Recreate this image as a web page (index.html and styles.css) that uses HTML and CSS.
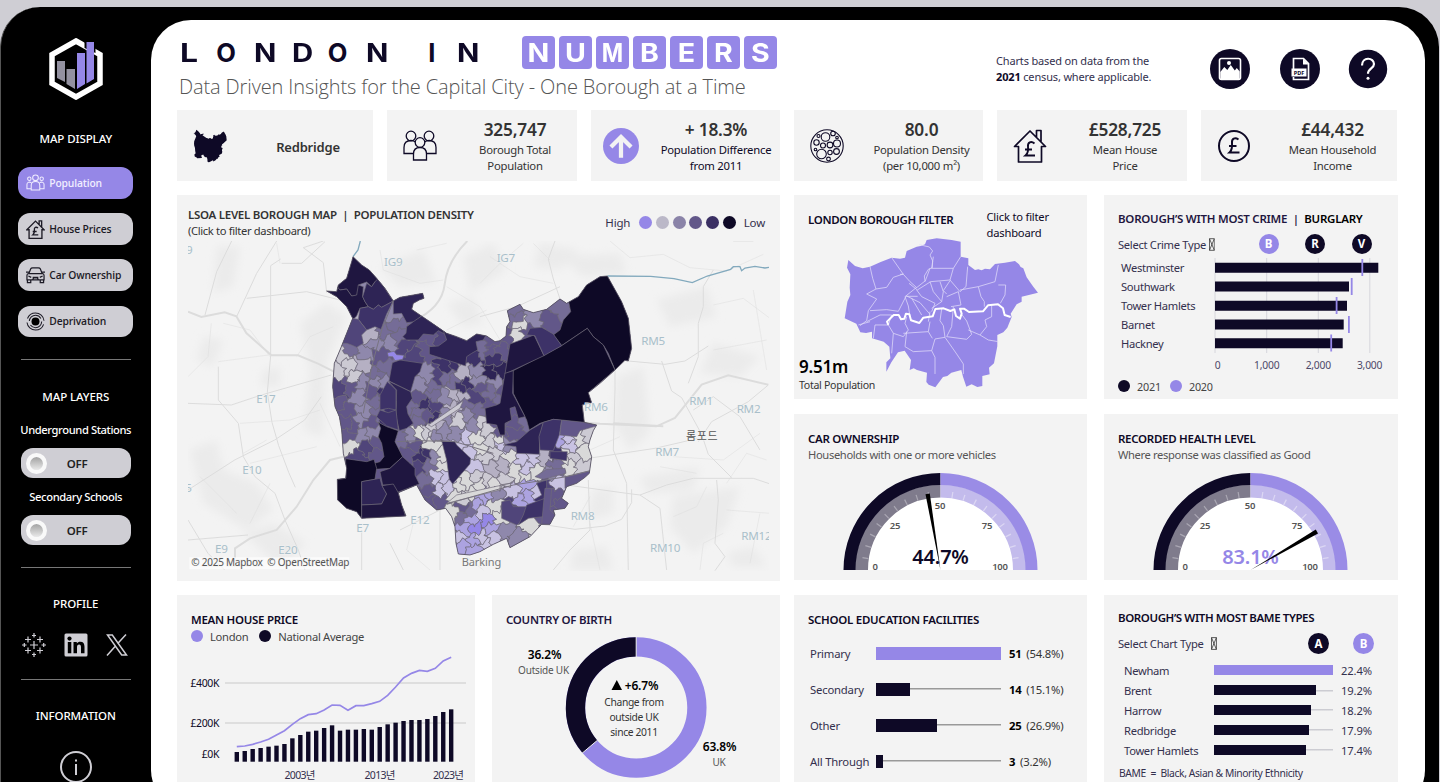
FILE: index.html
```html
<!DOCTYPE html>
<html lang="en">
<head>
<meta charset="utf-8">
<title>London in Numbers</title>
<link rel="stylesheet" href="styles.css">
</head>
<body>
<svg class="defs" width="0" height="0">
  <symbol id="house" viewBox="0 0 34 34"><path d="M1.5 17.5 17 2l15.500 15.500h-4V33h-23V17.500zM23.500 8V1.500h4.500V13" fill="none" stroke="currentColor" stroke-width="1.700" stroke-linejoin="round"/><path d="M21.500 14.500c-3.500-3-7-1-6.500 3 .3 3 .6 6.500-2.500 9h9.500M12 20.500h7" fill="none" stroke="currentColor" stroke-width="1.900"/></symbol>
  <symbol id="people" viewBox="0 0 34 32"><g fill="none" stroke="currentColor" stroke-width="1.300"><circle cx="8" cy="6" r="4.800"/><circle cx="26" cy="6" r="4.800"/><path d="M11 23.500H1v-6c0-5 3-7 7-7 2 0 3.500.7 4.500 1.500M23 23.500h10v-6c0-5-3-7-7-7-2 0-3.500.7-4.500 1.500"/><circle cx="17" cy="12.500" r="4.800"/><path d="M10.500 30v-6c0-4 2.500-6.500 6.500-6.500s6.500 2.500 6.500 6.500v6z"/></g></symbol>
  <symbol id="tofu" viewBox="0 0 6 13"><path d="M.5.5h5v12h-5zl5 12M5.500.5l-5 12" fill="none" stroke="#333" stroke-width=".8"/></symbol>
</svg>
<div class="frame">
  <aside class="side">
    <svg class="logo" viewBox="0 0 54 62"><path d="M27 3 51 16.500v29L27 59 3 45.500v-29z" fill="none" stroke="#fff" stroke-width="5.500"/><path d="M35.500 0h11v15l-11-5z" fill="#000"/><path d="M8 23h8v21l-8-4zM17.500 31H26v20l-8.500-5z" fill="#9391a0"/><path d="M28 15h8v31l-8 5zM37.500 4H45v37l-7.500 4.500z" fill="#9587e7"/></svg>
    <h2 class="s-map">MAP DISPLAY</h2>
    <nav class="nav">
      <button class="pill on"><svg viewBox="0 0 20 18"><g fill="none" stroke="currentColor" stroke-width="1.100"><circle cx="10" cy="4" r="3"/><circle cx="3.500" cy="5" r="1.800"/><circle cx="16.500" cy="5" r="1.800"/><path d="M5.500 17v-5c0-3 2-4 4.500-4s4.500 1 4.500 4v5zM5 15.500H1V11c0-2 2-3 4.500-2M15 15.500h4V11c0-2-2-3-4.500-2"/></g></svg>Population</button>
      <button class="pill"><svg viewBox="0 0 34 34"><g fill="none" stroke="currentColor" stroke-width="2.400"><path d="M1.500 17.500 17 2l15.500 15.500h-4V33h-23V17.500zM23.500 8V1.500h4.500V13"/><path d="M21.500 14.500c-3.500-3-7-1-6.500 3 .3 3 .6 6.500-2.500 9h9.500M12 20.500h7"/></g></svg>House Prices</button>
      <button class="pill"><svg viewBox="0 0 20 18"><path d="M3 7l2-5c.3-.7 1-1 2-1h6c1 0 1.700.3 2 1l2 5M2.500 7h15c1 0 1.500 1 1.500 2v4.500H1V9c0-1 .5-2 1.500-2zM0 5.500h3M17 5.500h3M1.500 14v2.500H5V14M15 14v2.500h3.500V14M7 11h6M2.500 9.500l3 1.500M17.500 9.500l-3 1.500M7 13.500l1-2h4l1 2" fill="none" stroke="currentColor" stroke-width="1.300"/></svg>Car Ownership</button>
      <button class="pill"><svg viewBox="0 0 20 20"><circle cx="10" cy="10" r="4.200" fill="#000"/><circle cx="10" cy="10" r="6.500" fill="none" stroke="currentColor" stroke-width="1.100" stroke-dasharray="16 4.400"/><circle cx="10" cy="10" r="9" fill="none" stroke="currentColor" stroke-width="1.100" stroke-dasharray="24 4.300" stroke-dashoffset="-3"/></svg>Deprivation</button>
    </nav>
    <hr>
    <h2 class="s-lay">MAP LAYERS</h2>
    <h3>Underground Stations</h3>
    <div class="toggle"><i></i><b>OFF</b></div>
    <h3 class="sec">Secondary Schools</h3>
    <div class="toggle"><i></i><b>OFF</b></div>
    <hr>
    <h2 class="s-pro">PROFILE</h2>
    <div class="social">
      <svg viewBox="0 0 24 24"><path d="M12 8v8M8 12h8M6 3.500v6M3 6.500h6M18 3.500v6M15 6.500h6M6 14.500v6M3 17.500h6M18 14.500v6M15 17.500h6M12 0v4.500M10 2.500h4M12 19.500V24M10 21.500h4M2.300 10v4M0 12h4.500M21.700 10v4M19.500 12H24" stroke="#cfced4" stroke-width="1.200" fill="none"/></svg>
      <svg viewBox="0 0 24 24"><rect x=".5" y=".5" width="23" height="23" rx="1.500" fill="#cfced4"/><circle cx="5.500" cy="5.600" r="2.100"/><path d="M3.800 9h3.500v11.300H3.800zM9.500 9h3.300v1.600c.8-1.300 2-1.900 3.500-1.900 3 0 4.200 1.900 4.200 5v6.600H17v-6c0-1.700-.6-2.700-1.900-2.700-1.400 0-2.100 1-2.100 2.700v6H9.500z"/></svg>
      <svg viewBox="0 0 24 24"><path d="M2.500 2h4.800l14.200 20h-4.800zM21 1.500l-8.500 9.200M10.500 13l-8.500 9.500" stroke="#cfced4" stroke-width="1.500" fill="none"/></svg>
    </div>
    <hr>
    <h2 class="s-inf">INFORMATION</h2>
    <svg class="info" viewBox="0 0 34 34"><circle cx="17" cy="17" r="15" fill="none" stroke="#cfced4" stroke-width="2"/><path d="M17 14v11M17 9.500v2" stroke="#cfced4" stroke-width="2"/></svg>
  </aside>

  <main class="page">
    <header class="head">
      <div class="brand">
        <h1 class="title"><span>L</span><span>O</span><span>N</span><span>D</span><span>O</span><span>N</span><span class="gap"></span><span>I</span><span>N</span></h1>
        <div class="tiles"><b><i>N</i></b><b><i>U</i></b><b><i>M</i></b><b><i>B</i></b><b><i>E</i></b><b><i>R</i></b><b><i>S</i></b></div>
        <p class="sub">Data Driven Insights for the Capital City - One Borough at a Time</p>
      </div>
      <p class="note">Charts based on data from the<br><b>2021</b> census, where applicable.</p>
      <div class="acts">
        <svg viewBox="0 0 40 40"><circle cx="20" cy="20" r="20" fill="#0e0926"/><rect x="9.500" y="9.500" width="21" height="21" rx="2" fill="none" stroke="#fff" stroke-width="1.600"/><path d="M10.300 23l4-5 3 3 3.500-5 4 5.500 2-2.500 2.900 3.500V30H10.300z" fill="#fff"/><circle cx="19" cy="14" r="2" fill="#fff"/></svg>
        <svg viewBox="0 0 40 40"><circle cx="20" cy="20" r="20" fill="#0e0926"/><path d="M13.500 20V9.500h10l5 5v16h-15V28" fill="none" stroke="#fff" stroke-width="1.700"/><path d="M23 9.500v6h6z" fill="#fff"/><rect x="11.500" y="19.500" width="15" height="8" fill="#fff"/><text x="19" y="26" text-anchor="middle" class="pdf">PDF</text></svg>
        <svg viewBox="0 0 40 40"><circle cx="20" cy="20" r="19.200" fill="#0e0926"/><path d="M14 16.500c0-9 12-8.500 12-1.500 0 4.500-6 4.500-6 9.800" fill="none" stroke="#fff" stroke-width="2.200"/><circle cx="20" cy="29.300" r="1.500" fill="#fff"/></svg>
      </div>
    </header>

    <section class="kpis">
      <article class="kpi one"><svg viewBox="430 190 935 920"><use href="#redb" fill="#0e0926"/></svg><div><strong>Redbridge</strong></div></article>
      <article class="kpi"><svg><use href="#people"/></svg><div><strong>325,747</strong><p>Borough Total<br>Population</p></div></article>
      <article class="kpi diff"><svg viewBox="0 0 34 34"><circle cx="17" cy="17" r="17" fill="#9587e7"/><path d="M17 28V9M7.500 18 17 8.500 26.500 18" fill="none" stroke="#f3f3f3" stroke-width="4"/></svg><div><strong>+ 18.3%</strong><p>Population Difference<br>from 2011</p></div></article>
      <article class="kpi"><svg viewBox="0 0 34 34"><g fill="none" stroke="#0e0926" stroke-width="1.100"><circle cx="17" cy="17" r="16.200"/><circle cx="15.500" cy="8" r="4.300"/><circle cx="11.500" cy="25" r="4.800"/><circle cx="27" cy="14.500" r="3.500"/><circle cx="6.500" cy="13.500" r="2.700"/><circle cx="13" cy="16.500" r="2.500"/><circle cx="20" cy="16" r="2.900"/><circle cx="26.500" cy="22.500" r="2.900"/><circle cx="20" cy="23.500" r="2.200"/><circle cx="18.500" cy="30" r="1.900"/><circle cx="23" cy="4.500" r="2.300"/><circle cx="27" cy="8.500" r="1.300"/><circle cx="5.500" cy="20.500" r="1.300"/><circle cx="8.500" cy="7" r="1.500"/></g></svg><div><strong>80.0</strong><p>Population Density<br>(per 10,000 m²)</p></div></article>
      <article class="kpi"><svg><use href="#house"/></svg><div><strong>£528,725</strong><p>Mean House<br>Price</p></div></article>
      <article class="kpi last"><svg viewBox="0 0 34 34"><circle cx="17" cy="17" r="15" fill="none" stroke="#0e0926" stroke-width="2"/><path d="M21.500 10.500c-3.500-2.500-7-1-6.500 3.500.3 3.500.3 7-2.500 9.500h10M12 17h7.500" fill="none" stroke="#0e0926" stroke-width="2"/></svg><div><strong>£44,432</strong><p>Mean Household<br>Income</p></div></article>
    </section>

    <section class="mid">
      <article class="card map">
        <div class="maphead"><div><h4>LSOA LEVEL BOROUGH MAP&nbsp; |&nbsp; POPULATION DENSITY</h4><p>(Click to filter dashboard)</p></div>
          <div class="scale"><span>High</span><i class="c1"></i><i class="c2"></i><i class="c3"></i><i class="c4"></i><i class="c5"></i><i class="c6"></i><span>Low</span></div></div>
        <svg class="mapsvg" viewBox="24 153 1744 990">
          <defs>
            <path id="redb" d="M519 200L545 225 568 240 590 265 615 295 640 333 660 322 700 315 728 310 732 325 718 330 700 340 695 358 720 375 760 402 800 430 830 440 860 452 890 432 920 438 945 455 960 452 978 438 980 410 990 395 982 362 1020 343 1030 358 1060 368 1100 358 1140 327 1160 340 1195 320 1220 285 1260 260 1282 258 1300 290 1325 335 1345 385 1350 430 1355 475 1345 513 1335 511 1305 540 1260 580 1225 608 1235 638 1207 645 1213 697 1250 705 1240 722 1230 750 1225 770 1235 800 1228 850 1215 862 1190 880 1160 890 1145 925 1165 940 1155 955 1120 960 1125 975 1110 1003 1085 1003 1050 1040 990 1073 980 1045 940 1063 900 1085 870 1095 835 1092 828 1060 825 1010 815 980 797 955 770 960 735 930 710 885 655 908 665 945 678 978 545 985 530 965 500 955 473 930 472 868 497 865 500 835 490 790 485 720 478 680 465 650 458 590 463 520 480 480 500 430 518 385 500 350 470 320 440 303 470 305 475 285 500 265 515 215Z"/>
            <clipPath id="redclip"><use href="#redb"/></clipPath>
            <filter id="soft" x="-20%" y="-20%" width="140%" height="140%"><feGaussianBlur stdDeviation="12"/></filter>
          </defs>
          <g fill="#ebebeb" filter="url(#soft)">
            <path d="M110 170h70l-20 120-60 20zM70 440l60 10-30 80-50-20zM360 400l80-60 60 40-60 140-10 220-60-20 20-180zM30 780l80-30 20 90 100 40 50 80-80 60-130-80zM190 1030l90-30 100 60-80 70zM600 230l130-50 40 100-110 10zM850 200l90-40 40 80-110 70zM800 340l80-20 30 80-60 10zM250 540l50-10v60h-60zM1140 200l180-10 20 60-130 10zM1430 330l150-40 30 90-140 30zM1310 560l80-30 20 200-60 50-50-80zM1600 460l140 40-60 60-120-10zM1380 860l180-30-20 70-140 10zM1480 920l200-30-40 120-100 80-70-80zM1180 1080l100-10 20 70-130 0zM1240 900l60-10v80l-80 20zM1080 160l120 20-60 60-80-10zM1640 1090l80-20 40 60h-100z"/></g>
          <g fill="none" stroke="#dcdcdc" stroke-width="2">
            <path stroke-width="6" d="M24 365l40 16 70-14 35 12 30 50 75 67h80l60 25 60 30M490 800l-40 10-50 60-50 80-60 70-80 25-45 30v30M862 153q-60 60-68 130t-94 110M1110 690l150 11 170 8 55-25 80-100 80-28 120 28M1300 700l150 9"/>
            <path stroke-width="3" d="M75 375l35-130 45-92M24 640l130 5 90-30 210-60M272 497l-10 110 14 90 20 70 30 80 20 45M115 530v100l60 70 15 100 35 60 60 50 30 80 40 90 20 60M24 900l140-90 120-60 90-60 50-70M170 380l60-130 60-97M272 497v-270l30-20M200 325l180-20 120 30M430 153l-60 20 60 45 10 90M305 220h60l70-65M24 990l60 100 50 50M24 1050l180-15M545 1020v120M660 1020l120-60 60-30M630 1060l40 80M780 960v180M900 380l110-30 130-60M1140 327l-20-60-15-60 20-54M1720 153l-60 0M1345 513l110 10 60-10 70-45M1445 513l30 90 30 20 60 110 20 60 70 70M1305 540v60l-5 180 40 100 5 260M1225 805l200-30 130-30M1160 885l180 25 40 5 80-30 80-20h180l90 30M1380 915l60 40 20 185M1610 870l5 60-10 130 30 40-30 42M1765 585l-60 50-110 60-40 60M1085 1003l100 15 90-10 50-20 30-50v-40M1225 870l5 150-60 60-50 60M1600 240l-30 50v60l-15 50v100l-30 80M1540 660l60-40 80 60 60 100"/>
            <path stroke-width="1.500" d="M130 400l80 20 60 80M115 515l150-20M350 500l40-60 70-30M180 700l150-10 90-30M190 790l70-40M24 560l60-60 10-100M290 160l10 60M210 820l200-50M60 860l110 110M270 880l-60 120M420 640l60 130M600 180l10 60 110 40 70-10M800 160l-90 20M800 290l100 60 60 100M800 420l120-60M930 200l90 60 100 20M900 280l60-60 70-60M1060 160l50 50M1290 153l60 50 100-10 80 40 110 10 110-50M1600 345l90-20 80 60M1600 480l160-30M1720 300l40 240M1480 800l150 10 110-80M1440 830l110 20M1580 890l-30 60-70 30M1230 780l90-40M1230 1000l30 140M1180 1010l50-90M1640 960l130 10M1740 970l-30 150M700 1000l-20 80 70 60M860 1100l50 40M1560 1140l10-80 60-30M1640 880l60-90 60 20"/>
          </g>
          <path d="M1282 258l130 1 70 7 55 12 45-20 70-20 8-8h20l5 12 10-8 30-5 30 5 50-8 60-10M519 200l15-20 7-27" fill="none" stroke="#82a9bd" stroke-width="4"/>
          <g id="lsoa" clip-path="url(#redclip)"></g>
          <use href="#redb" fill="none" stroke="#55505f" stroke-width="2.500"/>
          <g class="post">
            <text x="18" y="191">9</text><text x="612" y="229">IG9</text><text x="950" y="217">IG7</text><text x="1384" y="465">RM5</text><text x="1528" y="645">RM1</text><text x="1670" y="669">RM2</text><text x="1212" y="663">RM6</text><text x="1426" y="798">RM7</text><text x="1172" y="990">RM8</text><text x="1410" y="1086">RM10</text><text x="1684" y="1050">RM12</text><text x="229" y="640">E17</text><text x="187" y="853">E10</text><text x="105" y="1088">E9</text><text x="295" y="1093">E20</text><text x="529" y="1026">E7</text><text x="691" y="1003">E12</text><text x="16" y="906">5</text>
          </g>
          <text class="town" x="845" y="1127">Barking</text><text class="town ko" x="1518" y="749">롬포드</text>
          <path d="M28 1102h480v36H28z" fill="#fff" opacity=".65"/>
          <text class="town attr" x="34" y="1129" textLength="474">© 2025 Mapbox&#160; © OpenStreetMap</text>
        </svg>
      </article>

      <article class="card lond">
        <div class="row"><h4>LONDON BOROUGH FILTER</h4><p>Click to filter<br>dashboard</p></div>
        <svg class="lsvg" viewBox="12 135 879 493">
          <path fill="#9587e7" d="M175 210l20 18 23 7 22-5 32-14 33-13 25 3 15-3 5-20 30-13 12-2 13-5 5-13 30-5 45 5 27 5v45l23 5v20l20 15 10-2 10 3 10-5 15 2 15-16 30-4 30-5 12 10 5 8 8 4 10 27 20 28 14 18-49 12v15l-15 8-18 28 3 10-13 32-12 14-18 8v34l-10 51-15 13 2 20-22 5v30l-15 3-17-8-16 7-10-30-5-20-30 8-12 10-13 3-23 31-20-8-7-8 2-28-30-8-10-5-12 5 4-30-19-28-20 5-20 30-15 28v-28l12-12-3-35-17-15-35-10v-20l-18 4-17-2-12-26-35-16 8-50 9-20-2-22 2-40-10-20z"/>
          <g fill="none" stroke="#e0dbf8" stroke-width="2.300" stroke-linejoin="round">
            <path d="M240 230l8 35 10 32 32-5 20-30 30-10M305 203l35 50 20 22 20 18 25-20-2-15 12-20 12-5 1-20-8-18 8-12-10-12-30-7M430 200l-5 35h65l22-35M490 235l-10 35-58 5-40 25-25-20M420 235l-15 40M480 270l30 35 18-15 5-60M510 300l55-10 8 30 10 15v15M565 290l50-15 10-50M625 285l22 0-2 30-14 25M340 253l-10 0M258 297l-28 15 30 15-25 35-5 30-20 15M240 362l50-3 35 5 23-45 35 0M345 320l10 28 5 32M365 325l30 50M350 318l40 20 30 35M380 300l15 20 40 20-10 25M420 275l10 30 25 30-30 20M450 275l10 30-5 30M480 272l-20 30 10 10M470 320l35-15 8 40-30 5M380 292l-35 28M230 395l40-20 35 0M205 405l35-10M305 375l-10 30-40 0-5 40M295 405l15 25 30 10 15-20-10-20 5-20M310 430l-5 60M340 430l75-5 5-30M350 425l-5 45 25 15 55-3 10 20 0 50M425 482l10-35 30-5-5-35-10-15 5-35M415 425l12 20M465 442l35 50 20 30 0 30M490 350l-5 60-15 30 60 8 15-15-15-40-15-20M535 420l35 15 20-25-5-20 20-10v-35M570 435l25 15 30 5M415 395l5-30"/>
            <path stroke="#fff" stroke-width="6" d="M295 405l-4-10 20-20h15l7 13 10-2 5-15 10 2 5 18 25 8 12-16 28-4 8-22 25-2 20 8 12-5 5 20 12 8 5-15-5-15 12 0 15 10 42-2 15-18 30-3 15 12 5 20 18 6"/>
          </g></svg>
        <div class="pop"><strong>9.51m</strong><p>Total Population</p></div>
      </article>

      <article class="card crime">
        <h4>BOROUGH’S WITH MOST CRIME&nbsp; |&nbsp; <em>BURGLARY</em></h4>
        <div class="pick"><span>Select Crime Type</span><svg class="tofu"><use href="#tofu"/></svg><b class="dot lil">B</b><b class="dot">R</b><b class="dot">V</b></div>
        <svg class="csvg" viewBox="1104 256 294 118">
          <path d="M1215 258v95M1266.700 258v95M1318.300 258v95M1369.800 258v95" stroke="#d6d6dc" stroke-width="1"/>
          <path fill="#0e0926" d="M1215 262.800h163.300v10H1215zM1215 281.400h134v10H1215zM1215 300.800h132v10H1215zM1215 319.400h128.700v10H1215zM1215 338.300h127.700v10H1215z"/>
          <path stroke="#9587e7" stroke-width="1.800" d="M1362.300 259v17M1351.700 278v17M1336.600 297v17M1348.900 316v17M1331.200 334.500v17"/>
          <g class="lab"><text x="1121" y="272">Westminster</text><text x="1121" y="291">Southwark</text><text x="1121" y="310">Tower Hamlets</text><text x="1121" y="329">Barnet</text><text x="1121" y="348">Hackney</text></g>
          <g class="tick" text-anchor="middle"><text x="1217.500" y="369">0</text><text x="1266.700" y="369">1,000</text><text x="1318.300" y="369">2,000</text><text x="1369.600" y="369">3,000</text></g>
        </svg>
        <div class="leg"><i></i><span>2021</span><i class="lil"></i><span>2020</span></div>
      </article>

      <article class="card gauge"><h4>CAR OWNERSHIP</h4><p>Households with one or more vehicles</p>
        <svg viewBox="0 0 293 98"><g class="dial"></g><text class="gv" x="146.500" y="91.500">44.7%</text><path d="M146.500 98 131.500 22.300l4.300-.8z"/></svg></article>
      <article class="card gauge"><h4>RECORDED HEALTH LEVEL</h4><p>Where response was classified as Good</p>
        <svg viewBox="0 0 293 98"><g class="dial"></g><text class="gv lil" x="146.500" y="91.500">83.1%</text><path d="M146.500 98 211.800 57.500l2.200 4z"/></svg></article>
    </section>

    <section class="bottom">
      <article class="card price">
        <h4>MEAN HOUSE PRICE</h4>
        <div class="leg"><i class="lil"></i><span>London</span><i></i><span>National Average</span></div>
        <svg viewBox="177 645 298 140"><path d="M225 683h241M225 723h241" stroke="#dedede" stroke-width="1.800"/><g id="bars" fill="#0e0926"></g><polyline id="line" fill="none" stroke="#9587e7" stroke-width="1.700"/>
          <g class="lab pr" text-anchor="end"><text x="219" y="686.500">£400K</text><text x="219" y="726.500">£200K</text><text x="219" y="757.500">£0K</text></g>
          <g class="lab yr"><text x="284.500" y="778.500" textLength="31">2003년</text><text x="364.500" y="778.500" textLength="31">2013년</text><text x="433" y="778.500" textLength="31">2023년</text></g></svg>
      </article>
      <article class="card birth">
        <h4>COUNTRY OF BIRTH</h4>
        <svg viewBox="492 632 288 150">
          <circle cx="636.200" cy="707.500" r="60.700" fill="none" stroke="#9587e7" stroke-width="19.300"/>
          <circle cx="636.200" cy="707.500" r="60.700" fill="none" stroke="#0e0926" stroke-width="19.300" pathLength="100" stroke-dasharray="36.200 63.800" transform="rotate(139.700 636.200 707.500)"/>
          <path d="M636.200 637v20M597.300 740.400l-15.400 13" stroke="#f3f3f3"/>
          <g text-anchor="middle"><text class="pc" x="544.500" y="658.500">36.2%</text><text class="sm" x="543.500" y="674">Outside UK</text><text class="pc" x="719.500" y="751">63.8%</text><text class="sm" x="719" y="766">UK</text>
          <path d="M611.500 690h10.500l-5.200-10z"/><text class="pc" x="641.500" y="689.500">+6.7%</text><text class="md" x="634" y="705.500">Change from</text><text class="md" x="634" y="720.500">outside UK</text><text class="md" x="634" y="735.500">since 2011</text></g></svg>
      </article>
      <article class="card school">
        <h4>SCHOOL EDUCATION FACILITIES</h4>
        <div class="sbar"><span>Primary</span><div class="track full"><i style="width:100%"></i></div><p><b>51</b> (54.8%)</p></div>
        <div class="sbar"><span>Secondary</span><div class="track"><i style="width:27.500%"></i></div><p><b>14</b> (15.1%)</p></div>
        <div class="sbar"><span>Other</span><div class="track"><i style="width:49%"></i></div><p><b>25</b> (26.9%)</p></div>
        <div class="sbar"><span>All Through</span><div class="track"><i style="width:5.900%"></i></div><p><b>3</b> (3.2%)</p></div>
      </article>
      <article class="card bame">
        <h4>BOROUGH’S WITH MOST BAME TYPES</h4>
        <div class="pick"><span>Select Chart Type</span><svg class="tofu"><use href="#tofu"/></svg><b class="dot">A</b><b class="dot lil">B</b></div>
        <div class="bbar"><span>Newham</span><div class="track full"><i style="width:100%"></i></div><p>22.4%</p></div>
        <div class="bbar"><span>Brent</span><div class="track"><i style="width:85.700%"></i></div><p>19.2%</p></div>
        <div class="bbar"><span>Harrow</span><div class="track"><i style="width:81.300%"></i></div><p>18.2%</p></div>
        <div class="bbar"><span>Redbridge</span><div class="track"><i style="width:79.900%"></i></div><p>17.9%</p></div>
        <div class="bbar"><span>Tower Hamlets</span><div class="track"><i style="width:77.700%"></i></div><p>17.4%</p></div>
        <p class="foot">BAME&nbsp; =&nbsp; Black, Asian &amp; Minority Ethnicity</p>
      </article>
    </section>
  </main>
</div>
<script src="charts.js"></script>
</body>
</html>
```

FILE: styles.css
```css
* { box-sizing: border-box; margin: 0; padding: 0; }
html { overflow: hidden; }
body { height: 782px; overflow: hidden; background: #cfced4; font-family: "Noto Sans", "Open Sans", "Noto Sans CJK KR", sans-serif; color: #0e0926; font-size: 11.5px; letter-spacing: -.2px; }
svg { display: block; }
.defs { position: absolute; }
.frame { display: flex; height: 775px; margin: 7px 1px 0 0; padding: 13px 14px 0 0; background: #000; border-radius: 40px 40px 0 0; border-left: 1px solid #555; overflow: hidden; }

/* sidebar */
.side { width: 149.500px; flex: none; display: flex; flex-direction: column; align-items: center; color: #fff; padding-top: 18px; }
.logo { width: 54px; height: 62px; flex: none; }
.side h2 { font-size: 11.5px; font-weight: 500; line-height: 16px; letter-spacing: -.1px; }
.side h3 { font-size: 11.2px; font-weight: 500; line-height: 16px; margin-top: 17px; letter-spacing: -.4px; }
.side .s-map { margin-top: 31px; }
.nav { display: flex; flex-direction: column; gap: 14.500px; margin-top: 20px; }
.pill { display: flex; align-items: center; gap: 4px; width: 115px; height: 31.700px; border: 0; border-radius: 12px; background: #cfced4; color: #1d1b26; font: 600 10.300px "Open Sans", sans-serif; letter-spacing: -.15px; padding: 0 0 0 8px; white-space: nowrap; }
.pill svg { width: 19px; height: 19px; flex: none; }
.pill.on { background: #9587e7; color: #f0edff; }
.side hr { width: 110px; border: 0; border-top: 1.500px solid #777; margin-top: 22px; flex: none; }
.side .s-lay { margin-top: 29px; }
.toggle { display: flex; align-items: center; width: 110px; height: 30px; margin-top: 10px; padding-left: 5px; border-radius: 12px; background: #cfced4; color: #222; font-size: 11.5px; flex: none; }
.toggle i { width: 21px; height: 21px; border-radius: 50%; border: 4.500px solid #f9f9f9; background: linear-gradient(#8d8d8d, #fff) border-box; background-clip: padding-box; }
.toggle b { margin-left: 20px; font-weight: 600; }
.side .sec { margin-top: 11px; }
.side .s-pro { margin-top: 28px; }
.social { display: flex; gap: 17.500px; margin-top: 21px; }
.social svg { width: 24px; height: 24px; }
.side .s-inf { margin-top: 28px; }
.info { width: 34px; height: 34px; margin-top: 26px; flex: none; }

/* page */
.page { flex: 1; height: 790px; flex-shrink: 0; background: #fff; border-radius: 40px; padding: 0 27px 0 26.500px; overflow: hidden; }
.head { display: flex; height: 90px; padding-top: 16px; }
.brand { width: 819px; display: grid; grid-template-columns: 344px 1fr; grid-template-rows: 33px auto; }
.title { display: flex; font: 700 25.500px/33px Inter, sans-serif; letter-spacing: 0; }
.title span { width: 37.200px; padding-left: 3px; transform: scaleX(1.15); transform-origin: 3px 0; }
.title span:nth-child(1) { transform: scaleX(1.25); }
.title span:nth-child(2), .title span:nth-child(5) { transform: translateX(-1px); }
.title .gap { width: 25px; }
.title span:nth-child(8) { width: 29px; transform: none; }
.tiles { display: flex; gap: 4.200px; padding-left: 1px; }
.tiles b { width: 32.900px; height: 33px; border-radius: 4px; background: #9587e7; color: #fff; font: 700 25.500px/33px Inter, sans-serif; letter-spacing: 0; text-align: center; }
.tiles i { display: block; font-style: normal; transform: scaleX(1.12); }
.tiles b:nth-child(3) i { transform: scaleX(.9); }
.sub { grid-column: 1 / 3; padding-left: 2px; font: 300 20px/24px "Open Sans", sans-serif; color: #555; margin-top: 6px; letter-spacing: -.12px; white-space: nowrap; }
.note { font-size: 11px; line-height: 16.300px; width: 214px; padding-top: 17px; color: #33304d; white-space: nowrap; letter-spacing: -.16px; }
.note b { color: #0e0926; }
.acts { display: flex; gap: 30px; padding-top: 13px; }
.acts svg { width: 40px; height: 40px; flex: none; }
.acts svg:last-child { margin-left: -2px; }
.pdf { font: 700 5.500px "Noto Sans", sans-serif; fill: #0e0926; letter-spacing: 0; }
.kpis { display: grid; grid-template-columns: 196px 190px 189px 189px 190px 196px; gap: 14px; height: 71px; }
.kpi { display: flex; align-items: center; padding-left: 16px; background: #f3f3f3; color: #333; text-align: center; }
.kpi svg { width: 34px; height: 34px; flex: none; color: #0e0926; }
.kpi div { flex: 1; padding: 2px 0 0 16px; white-space: nowrap; }
.kpi.diff svg { width: 36px; height: 36px; margin-left: -4px; }
.kpi.diff div { padding-left: 13px; }
.kpi.last div { padding-left: 17px; }
.kpi strong { display: block; font-size: 17.300px; line-height: 20px; font-weight: 600; letter-spacing: -.2px; }
.kpi.one strong { font-size: 13px; }
.kpi p { font-size: 11.300px; line-height: 16px; margin-top: 2px; letter-spacing: -.23px; }
.kpi.diff p { color: #0e0926; }
.card { background: #f3f3f3; position: relative; }
h4 { font-size: 11.500px; line-height: 16px; font-weight: 600; letter-spacing: -.28px; white-space: nowrap; }
.mid { display: grid; grid-template-columns: 603px 293px 294px; grid-template-rows: 204px 166px; column-gap: 14px; row-gap: 15px; margin-top: 14px; height: 385px; }
.mid > :nth-child(3), .mid > :nth-child(5) { margin-left: 3px; width: 294px; }
.map { grid-row: 1 / 3; height: 386px; padding: 12px 11px 0; }
.maphead { display: flex; justify-content: space-between; height: 34px; color: #333; }
.maphead p { line-height: 16px; font-size: 11.200px; letter-spacing: -.35px; }
.scale { display: flex; align-items: center; gap: 3.800px; height: 31px; color: #33304d; padding-right: 4px; }
.scale i { width: 13px; height: 13px; border-radius: 50%; }
.scale span:first-child { margin-right: 5px; }
.scale span:last-child { margin-left: 4px; }
.c1 { background: #9587e7; } .c2 { background: #bbb8c8; } .c3 { background: #8a83a8; } .c4 { background: #625789; } .c5 { background: #3a2f63; } .c6 { background: #0e0926; }
.mapsvg { width: 581.300px; height: 330px; }
.post text { font-size: 35px; fill: #a9bfca; stroke: #f3f3f3; stroke-width: 3; paint-order: stroke; letter-spacing: -.8px; }
.town { font-size: 33px; fill: #777; stroke: #f3f3f3; stroke-width: 4; paint-order: stroke; }
.ko { font-family: "Noto Sans CJK KR", sans-serif; fill: #555; letter-spacing: 2px; }
.attr { font-size: 30px; fill: #555; }
.lond { padding-top: 14px; }
.lond .row { display: flex; padding-left: 14px; height: 31px; }
.lond h4 { width: 178.500px; padding-top: 3px; letter-spacing: -.33px; }
.lond .row p { line-height: 16px; font-size: 11.200px; }
.lsvg { width: 293px; height: 164.300px; margin-top: -5px; }
.pop { position: absolute; left: 5px; bottom: 5px; color: #333; }
.pop strong { display: block; font-size: 17px; line-height: 21px; font-weight: 600; color: #000; }
.pop p { font-size: 10.600px; line-height: 17px; letter-spacing: -.3px; }
.crime { padding-top: 16px; }
.crime h4, .bame h4 { padding-left: 14px; }
h4 em { font-style: normal; color: #000; }
.crime h4 { color: #1f1640; letter-spacing: -.25px; }
.pick { display: flex; align-items: center; height: 20px; padding-left: 14px; margin-top: 7px; font-size: 11.200px; color: #33304d; letter-spacing: -.3px; }
.pick span { width: 94px; white-space: nowrap; }
.pick .tofu { width: 6px; height: 13px; margin-right: 43.500px; }
.dot { width: 20px; height: 20px; border-radius: 50%; background: #0e0926; color: #fff; text-align: center; font-size: 11.500px; line-height: 20px; margin-right: 26.500px; letter-spacing: 0; flex: none; }
.dot.lil, .leg i.lil { background: #9587e7; }
.csvg { width: 294px; height: 118px; margin-top: 2px; }
.lab { font-size: 11.200px; fill: #33304d; letter-spacing: -.3px; }
.tick { font-size: 10.300px; fill: #4d4969; }
.leg { display: flex; align-items: center; gap: 7px; padding-left: 14px; height: 16px; color: #444; font-size: 10.800px; }
.leg i { width: 12px; height: 12px; border-radius: 50%; background: #0e0926; }
.leg i + span { margin-right: 2px; }
.crime .leg { margin-top: 4px; }
.gauge { padding-top: 17px; }
.gauge h4, .gauge p { padding-left: 14px; }
.gauge p { font-size: 11.200px; line-height: 16px; color: #555; letter-spacing: -.36px; }
.gauge svg { width: 293px; height: 98px; margin-top: 8.500px; }
.gauge .gn { font-size: 9.500px; font-weight: 600; fill: #555; }
.gv { font-size: 20px; font-weight: 600; text-anchor: middle; fill: #0e0926; }
.gv.lil { fill: #9587e7; }
.bottom { display: grid; grid-template-columns: 298px 288px 293px 294px; column-gap: 17px; margin-top: 15px; height: 200px; }
.bottom > :nth-child(3) { margin-left: -3px; width: 293px; }
.bottom > :nth-child(4) { margin-left: -3px; width: 294px; }
.price, .birth, .school { padding-top: 17px; }
.price h4, .birth h4, .school h4 { padding-left: 14px; }
.price .leg { font-size: 11.200px; letter-spacing: -.3px; }
.price .leg i + span { margin-right: 4px; }
.price > svg { width: 298px; height: 140px; margin-top: 1px; }
.pr { font-size: 10.500px; letter-spacing: -.4px; fill: #0e0926; }
.yr { font-family: "Noto Sans", "Noto Sans CJK KR", sans-serif; font-size: 10.500px; letter-spacing: 0; }
.birth > svg { width: 288px; height: 150px; margin-top: 4px; }
.birth h4 { color: #1f1640; }
.pc { font-size: 12px; font-weight: 600; }
.sm { font-size: 10px; fill: #555; }
.md { font-size: 10.300px; fill: #333; letter-spacing: -.35px; }
.school h4 { margin-bottom: 7px; }
.sbar { display: grid; grid-template-columns: 66px 125px 1fr; align-items: center; height: 36px; padding-left: 16px; white-space: nowrap; color: #33304d; font-size: 11.300px; }
.sbar p { padding-left: 8px; color: #333; }
.sbar b { margin-right: 2px; color: #000; }
.track { display: flex; align-items: center; height: 13px; background: linear-gradient(#999, #999) center / 100% 1.500px no-repeat; }
.track i { height: 13px; background: #0e0926; }
.full i { background: #9587e7; }
.bame { padding-top: 15px; }
.bame h4 { letter-spacing: -.4px; }
.bame .pick { margin: 7px 0 7.500px; }
.bame .pick .tofu { margin-right: 91.500px; }
.bame .dot { line-height: 21px; width: 21px; height: 21px; margin-right: 24px; }
.bbar { display: grid; grid-template-columns: 90px 119px 1fr; align-items: center; height: 19.900px; padding-left: 20px; white-space: nowrap; color: #33304d; font-size: 11.200px; letter-spacing: -.3px; }
.bbar p { padding-left: 8px; letter-spacing: -.1px; }
.bbar .track { height: 10px; background-image: linear-gradient(#ccccd2, #ccccd2); }
.bbar .track i { height: 10px; }
.foot { padding: 5px 0 0 15px; font-size: 10.300px; line-height: 16px; color: #33304d; letter-spacing: -.38px; }
```

FILE: charts.js
```js
const NS = 'http://www.w3.org/2000/svg';
function add(parent, tag, attrs, text) {
  const el = document.createElementNS(NS, tag);
  for (const k in attrs) el.setAttribute(k, attrs[k]);
  if (text) el.textContent = text;
  parent.appendChild(el);
  return el;
}

// Density shades, darkest to lightest, then the lilac end of the scale.
const shade = { a: '#0e0926', b: '#1f1640', c: '#2e2455', d: '#3d3268', e: '#50457a', f: '#625789', g: '#756c97', h: '#8f88ac', i: '#b5b0c3', j: '#cccad3', k: '#d9d9d9', l: '#c8c2e2', m: '#aca3e0', n: '#9587e7' };

// Centre and shade of each small area.
const areas = `510,470,g 570,435,i 585,460,h 560,490,h 485,500,j 480,540,j 505,530,j 550,525,i 525,560,j 590,575,h 545,580,h 535,620,h 480,600,e 510,590,f 475,640,f 500,660,f 605,580,h 575,600,f 585,640,g 620,610,d 630,680,d 590,665,g 555,665,h 545,690,h 570,700,f 500,700,f 520,710,f 510,738,f 545,735,h 575,725,h 515,770,k 560,770,e 590,760,f 530,795,e 595,795,f
640,400,g 635,380,h 615,430,g 630,455,h 655,440,g 600,500,f 610,530,g 590,550,g 680,470,e 700,495,e 740,480,f 780,445,e 755,440,f
905,475,g 935,480,f 940,455,f 945,510,d 880,505,d 800,530,d 820,515,d 850,545,i 890,550,h 930,550,c 770,560,e 745,560,h 720,590,h 755,590,g 800,560,g 820,575,g 860,585,d 845,590,d 895,570,h 910,590,f 880,620,e 930,600,g 935,650,f 820,615,i 850,620,i 795,625,h 760,620,g 720,620,f 735,640,d 765,650,e 710,670,g 690,650,g 715,690,g 745,680,f 760,690,d 820,655,i 800,680,h 770,700,i 860,640,g 865,675,h 830,695,j 895,665,g 900,700,j 880,710,h
690,740,h 665,745,g 715,730,k 740,725,j 765,735,h 790,720,h 755,722,j 830,730,h 855,740,l 890,745,k 920,720,j 930,755,j 755,765,k 700,770,f 690,790,f 720,800,d 740,790,d 745,830,g 720,830,e 765,800,h 785,800,k 790,830,k 770,860,l 795,860,l 805,890,l 775,905,l 740,870,g 750,905,f 780,930,f 745,930,f 840,770,l 870,785,l 915,800,j 945,785,j 900,780,k 885,830,l 935,840,i 890,860,j 860,880,k 840,890,k 920,870,j 895,885,k 945,880,k 830,915,k 880,910,k 850,930,j
990,800,k 960,770,l 965,830,i 975,870,j 1005,850,k 1035,860,k 1040,835,l 1030,810,l 1060,800,l 1090,800,i 1135,795,d 1130,830,g 1110,855,h 1065,850,k 1165,740,l 1135,745,m 1170,770,l 1200,740,k 1220,735,j 1180,800,j 1210,790,k 1205,830,j 1170,830,k 1150,800,k
960,690,f 1000,700,f 1035,690,g 1000,730,f 960,730,f 1005,660,f 955,745,k 985,765,h
1125,875,l 1100,885,e 1040,885,m 1000,905,l 950,915,h 1070,910,l 1045,920,m 1015,935,m 1120,920,f 1145,940,f 1100,960,f 985,950,e 1100,990,f 1055,1010,k 975,1020,h 1015,1045,h 948,950,k 960,980,k 905,920,m 925,912,m 850,955,f 840,985,g 868,960,g 890,945,m 905,965,l 875,990,m 925,990,n 885,1015,n 850,1020,m 840,1040,l 850,1070,m 880,1050,m 900,1040,l 935,1015,m 940,1045,l 925,1065,l 880,1085,m 822,970,k
1010,390,g 1000,360,g 1020,400,k 1005,435,k 1060,390,h 1110,380,f 1130,360,g 1045,425,f 980,440,f 960,480,f 955,540,c 945,580,h 970,600,f 960,630,g`
  .split(/\s+/).map(s => { const p = s.split(','); return { x: +p[0], y: +p[1], c: shade[p[2]] }; });

const g = document.getElementById('lsoa');
add(g, 'rect', { x: 430, y: 190, width: 940, height: 920, fill: shade.f });

// Irregular boundaries: each shared edge is walked in short steps and nudged by position.
function wobble(x, y) {
  return (x + 6 * Math.sin(y * .21 + x * .07) + 3 * Math.sin(y * .57)).toFixed(1) + ' ' +
         (y + 6 * Math.sin(x * .19 - y * .09) + 3 * Math.sin(x * .61)).toFixed(1);
}
areas.forEach((s, n) => {
  let poly = [[430, 190], [1370, 190], [1370, 1110], [430, 1110]];
  areas.forEach((o, m) => {
    if (m === n) return;
    const dx = o.x - s.x, dy = o.y - s.y, k = (o.x * o.x + o.y * o.y - s.x * s.x - s.y * s.y) / 2;
    const out = [];
    poly.forEach((p, i) => {
      const q = poly[(i + 1) % poly.length];
      const a = p[0] * dx + p[1] * dy - k, b = q[0] * dx + q[1] * dy - k;
      if (a <= 0) out.push(p);
      if ((a < 0 && b > 0) || (a > 0 && b < 0)) {
        const t = a / (a - b);
        out.push([p[0] + (q[0] - p[0]) * t, p[1] + (q[1] - p[1]) * t]);
      }
    });
    poly = out;
  });
  const pts = [];
  poly.forEach((p, i) => {
    const q = poly[(i + 1) % poly.length];
    const len = Math.hypot(q[0] - p[0], q[1] - p[1]), steps = Math.max(1, Math.round(len / 6));
    for (let j = 0; j < steps; j++) pts.push(wobble(p[0] + (q[0] - p[0]) * j / steps, p[1] + (q[1] - p[1]) * j / steps));
  });
  add(g, 'polygon', { points: pts.join(' '), fill: s.c, stroke: '#6f6b78', 'stroke-width': 2 });
});

// Larger areas with their own outlines.
[
  ['b', '510 190 545 215 568 235 600 268 585 275 575 290 560 276 535 285 545 300 530 318 515 318 500 297 480 300 462 285 500 260'],
  ['b', '430 300 472 290 480 300 500 297 515 318 530 315 535 285 550 290 548 320 555 335 565 350 540 355 530 378 518 390 495 350 470 325'],
  ['c', '560 280 575 290 585 275 595 265 640 333 605 352 595 345 580 358 565 350 555 335 548 320'],
  ['d', '540 355 565 350 580 358 595 345 605 352 640 333 620 372 603 418 585 410 560 420 535 388'],
  ['e', '515 385 535 388 560 420 545 435 550 460 530 472 515 465 500 460 485 460'],
  ['c', '640 333 650 315 735 300 735 330 700 345 700 360 725 378 705 395 680 398 665 370 640 372'],
  ['c', '725 378 700 395 680 410 678 430 668 440 680 450 715 450 730 432 760 435 775 422 800 435 805 420'],
  ['c', '790 422 830 440 860 452 890 430 918 436 910 450 888 455 893 480 875 490 860 500 857 528 748 493 748 470 775 468 800 450'],
  ['c', '637 518 660 510 728 520 720 545 705 560 692 605 627 573'],
  ['c', '625 573 692 605 697 625 680 650 684 672 700 700 680 715 658 722 648 680 650 600'],
  ['d', '600 615 622 575 648 600 648 660 625 655 600 660'],
  ['d', '600 660 625 668 648 660 655 720 620 708 600 690 590 680'],
  ['a', '595 697 620 710 655 722 645 755 668 800 630 835 585 838 582 820 600 815 612 800 605 760 595 740 602 715'],
  ['b', '668 800 690 820 705 835 705 855 718 882 650 908 640 885 608 885 600 845 630 835'],
  ['a', '497 806 560 815 582 808 590 835 585 868 545 875 545 985 500 965 465 930 465 868 497 865'],
  ['c', '545 875 600 865 606 887 620 912 605 942 545 945'],
  ['b', '545 945 605 942 620 912 606 887 640 882 655 908 680 990 545 990'],
  ['n', '622 488 642 484 650 494 672 496 668 508 645 512 638 500 625 500'],
  ['c', '785 752 825 755 830 765 872 805 870 822 818 882 808 868 800 810'],
  ['j', '745 705 850 632 840 655 755 710'],
  ['a', '1165 330 1195 320 1220 280 1260 250 1300 250 1370 400 1370 520 1335 511 1305 540 1285 490 1270 465 1240 440 1222 415 1145 467 1120 435 1140 420 1150 390 1172 365'],
  ['a', '998 543 1145 467 1222 415 1240 440 1270 465 1305 540 1225 608 1245 638 1207 645 1215 700 1120 688 1080 700 1048 720 1040 690 1035 680 1000 610'],
  ['b', '990 462 1062 435 1092 497 975 552'],
  ['d', '1040 435 1050 415 1085 412 1120 432 1145 467 1092 497 1065 437'],
  ['b', '975 550 1000 542 998 610 1035 680 1015 685 1005 650 990 655 995 690 975 700 975 735 960 735 950 705 920 700 915 655 950 645 960 640'],
  ['c', '1090 697 1080 740 1078 793 1010 790 1008 770 970 765 1010 755 1050 720'],
  ['d', '1090 697 1120 688 1145 690 1138 735 1120 782 1080 780 1077 740'],
  ['f', '1145 690 1213 697 1260 705 1235 712 1200 722 1190 740 1140 735'],
  ['d', '1110 785 1162 785 1160 812 1110 805'],
  ['g', '1100 838 1155 835 1158 850 1090 868 1065 860'],
  ['d', '1070 880 1100 870 1100 925 1090 945 1060 930 1085 915'],
  ['e', '965 935 990 930 1000 950 1040 950 1045 985 1010 1005 965 985'],
  ['d', '1040 945 1095 925 1090 980 1045 985 1015 1005 1030 975'],
  ['f', '1155 860 1240 840 1215 865 1190 885 1155 895'],
  ['f', '1095 895 1115 895 1110 960 1125 975 1115 1010 1085 1003'],
  ['k', '800 940 960 900 960 885 1000 878 830 915']
].forEach(p => add(g, 'polygon', { points: p[1], fill: shade[p[0]], stroke: '#6f6b78', 'stroke-width': 2 }));
add(g, 'path', { d: 'M640 333 605 420 575 530 550 670M650 755 720 752 825 755 940 790M800 942 1000 885 1160 860 1240 840', fill: 'none', stroke: '#77737f', 'stroke-width': 3 });

// Gauge dials share one drawing.
document.querySelectorAll('.dial').forEach(d => {
  const cx = 146.5, cy = 98;
  const arc = (r, from, to, w, c) => {
    const pt = t => (cx - r * Math.cos(t)) + ' ' + (cy - r * Math.sin(t));
    add(d, 'path', { d: `M${pt(from)}A${r} ${r} 0 0 1 ${pt(to)}`, fill: 'none', stroke: c, 'stroke-width': w });
  };
  add(d, 'circle', { cx, cy, r: 73, fill: '#fff' });
  const H = Math.PI / 2;
  arc(79, 0, H, 13, '#7f7b8c'); arc(79, H, 2 * H, 13, '#c3bbec');
  arc(91, 0, H, 12, '#0e0926'); arc(91, H, 2 * H, 12, '#9a8ce6');
  for (let i = 1; i < 20; i++) {
    if (i === 10) continue;
    const t = Math.PI * i / 20;
    add(d, 'line', { x1: cx - 73 * Math.cos(t), y1: cy - 73 * Math.sin(t), x2: cx - 79 * Math.cos(t), y2: cy - 79 * Math.sin(t), stroke: i < 10 ? '#aaa7b3' : '#dcd7f3', 'stroke-width': 1.2 });
  }
  [[81, 97.500, '0'], [101, 57, '25'], [146, 36.500, '50'], [193, 57, '75'], [206, 97.500, '100']].forEach(l =>
    add(d, 'text', { x: l[0], y: l[1], 'text-anchor': 'middle', class: 'gn' }, l[2]));
});

// House prices: bar tops and line heights, one per year.
const bars = [501, 498, 492, 489, 485, 482, 477, 460, 450, 440, 437, 429, 421, 437, 434, 434, 432, 434, 426, 418, 413, 408, 405, 405, 402, 393, 381, 373];
const line = [485, 483, 478, 471, 463, 450, 437, 418, 401, 389, 386, 375, 360, 361, 376, 362, 362, 356, 349, 331, 306, 279, 265, 256, 259, 250, 228, 217];
const X = i => 236.8 + i * 7.94, Y = v => 585 + v / 3;
bars.forEach((v, i) => add(document.getElementById('bars'), 'rect', { x: X(i) - 2.2, y: Y(v), width: 4.4, height: 761.7 - Y(v) }));
document.getElementById('line').setAttribute('points', line.map((v, i) => X(i) + ',' + Y(v)).join(' '));
```
